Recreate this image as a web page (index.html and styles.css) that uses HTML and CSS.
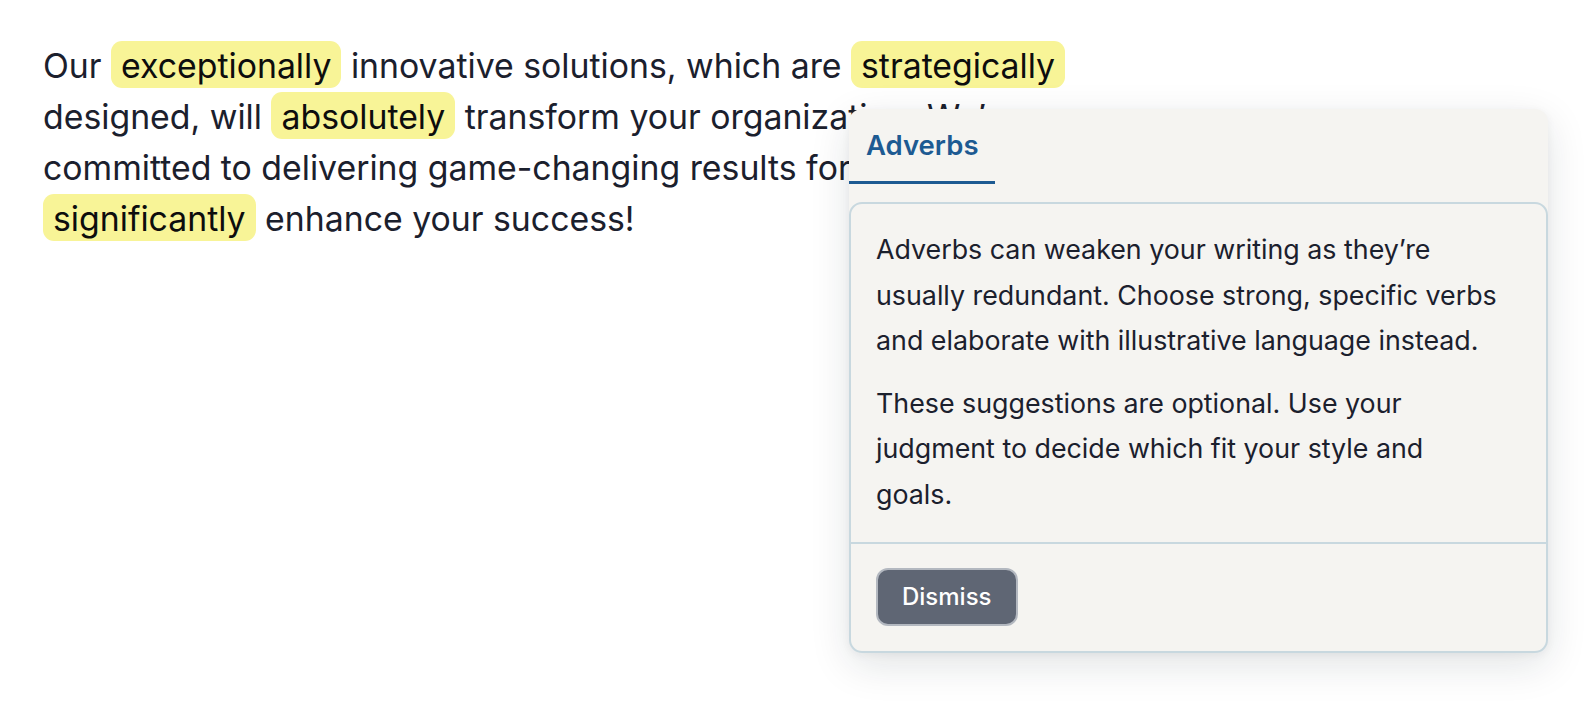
FILE: index.html
```html
<!DOCTYPE html>
<html lang="en">
<head>
<meta charset="utf-8">
<title>Adverbs</title>
<link rel="stylesheet" href="styles.css">
</head>
<body>
<main class="page">
  <p class="copy">Our <span class="hl">exceptionally</span> innovative solutions, which are <span class="hl">strategically</span> designed, will <span class="hl">absolutely</span> transform your organization. We’re committed to delivering game-changing results for you that will <span class="hl">significantly</span> enhance your success!</p>

  <div class="popover">
    <div class="tabs">
      <div class="tab">Adverbs</div>
    </div>
    <div class="panel">
      <div class="panel-body">
        <p>Adverbs can weaken your writing as they’re usually redundant. Choose strong, specific verbs and elaborate with illustrative language instead.</p>
        <p>These suggestions are optional. Use your judgment to decide which fit your style and goals.</p>
      </div>
      <div class="panel-footer">
        <button class="btn">Dismiss</button>
      </div>
    </div>
  </div>
</main>
</body>
</html>
```

FILE: styles.css
```css
html, body {
  margin: 0;
  padding: 0;
  background: #ffffff;
}

body {
  font-family: "Inter", "Noto Sans", sans-serif;
  color: #1b202d;
}

.page {
  position: relative;
  box-sizing: border-box;
  min-height: 710px;
  padding: 40px 0 0 43px;
}

.copy {
  margin: 0;
  max-width: 1100px;
  font-size: 33.8px;
  line-height: 51px;
}

.hl {
  background: #f8f497;
  color: #0d0d0d;
  border-radius: 11px;
  padding: 4px 10px 2px 10px;
}

.popover {
  position: absolute;
  left: 849px;
  top: 109px;
  width: 699px;
  background: #f5f4f1;
  border-radius: 13px;
  box-shadow: 0 12px 40px rgba(20, 30, 40, 0.12), 0 2px 8px rgba(20, 30, 40, 0.05);
}

.tabs {
  display: flex;
  margin-bottom: 18px;
}

.tab {
  font-size: 27.5px;
  line-height: 40px;
  font-weight: 600;
  color: #1d5a92;
  padding: 16px 17px 16px 17px;
  border-bottom: 3px solid #1d5a92;
}

.panel {
  border: 2px solid #c8d8df;
  border-radius: 13px;
}

.panel-body {
  padding: 23px 43px 25px 25px;
  font-size: 26.8px;
  line-height: 45.5px;
}

.panel-body p {
  margin: 0 0 17px 0;
}

.panel-body p:last-child {
  margin-bottom: 0;
}

.panel-footer {
  border-top: 2px solid #c8d8df;
  padding: 24px 25px 25px 25px;
}

.btn {
  font-family: "Inter", "Noto Sans", sans-serif;
  font-size: 24px;
  font-weight: 500;
  line-height: 30px;
  color: #ffffff;
  background: #5f6674;
  border: 2px solid #b3b8c0;
  border-radius: 12px;
  padding: 12px 24px;
  cursor: pointer;
}
```
